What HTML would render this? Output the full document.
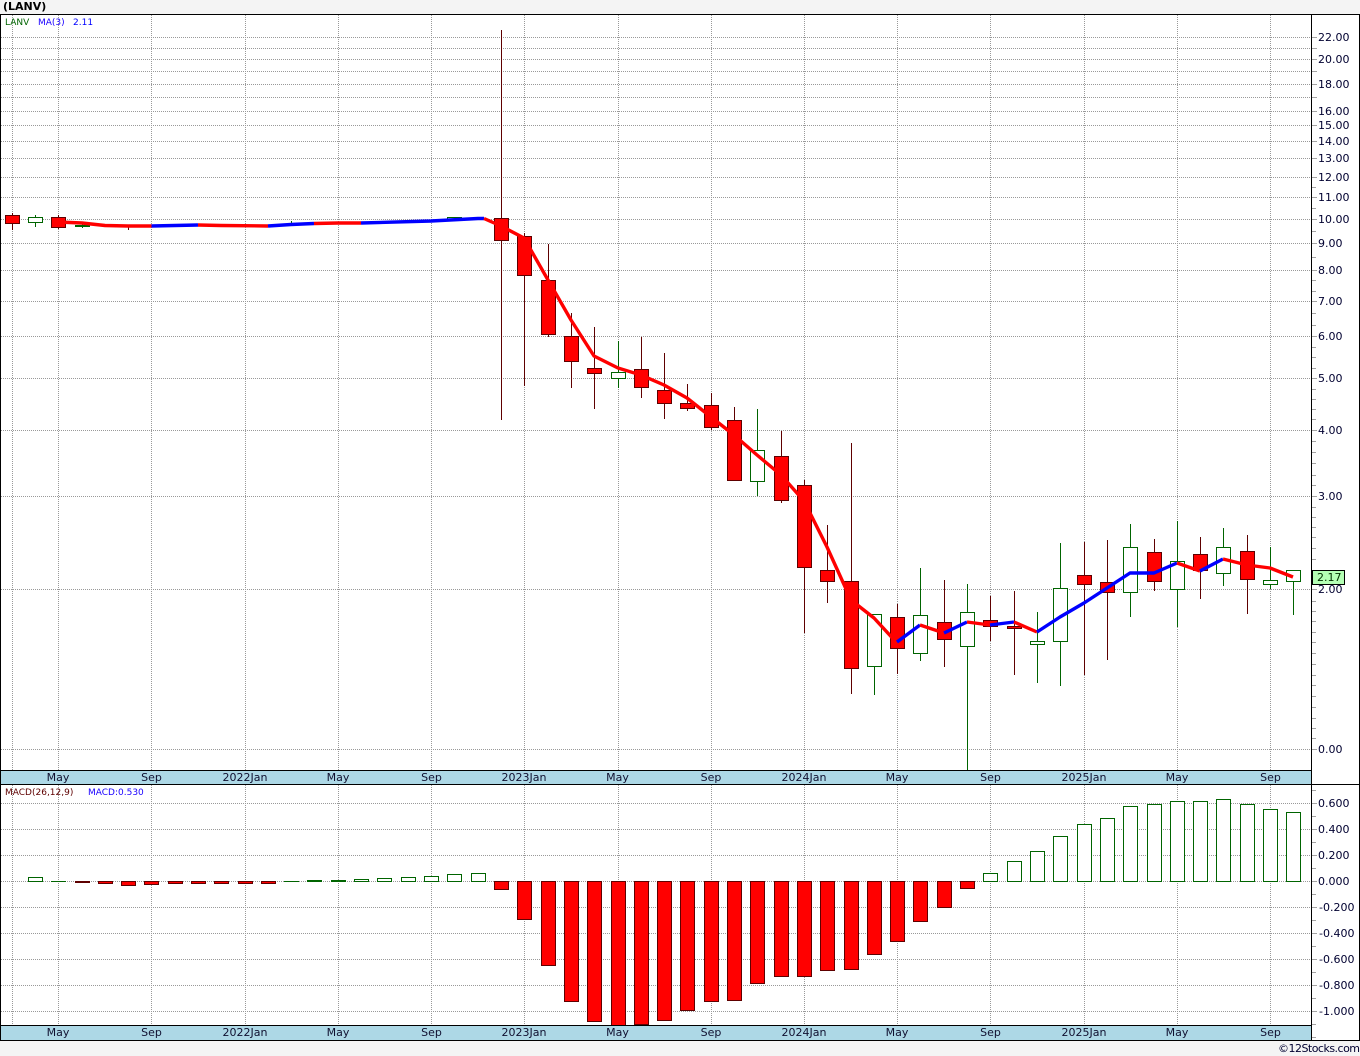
<!DOCTYPE html>
<html><head><meta charset="utf-8"><title>LANV</title>
<style>
html,body{margin:0;padding:0;background:#f4f4f4}
svg{display:block}
text{font-family:"DejaVu Sans","Liberation Sans",sans-serif;font-size:11px;fill:#000}
.c{shape-rendering:crispEdges}
.grid{stroke:#999;stroke-width:1;stroke-dasharray:1 1;fill:none}
.tick{stroke:#a3a3a3;stroke-width:1;fill:none}
.wr{stroke:#5e0000;stroke-width:1;fill:none}
.wg{stroke:#006400;stroke-width:1;fill:none}
.r rect{fill:#f00;stroke:#5e0000;stroke-width:1}
.g rect{fill:#fff;stroke:#006400;stroke-width:1}
.m{fill:none;stroke-width:3.4;stroke-linejoin:round}
.ax text{text-anchor:middle;fill:#101030}
.lb text{fill:#000030}
.s text{font-size:9px}
</style></head>
<body>
<svg width="1360" height="1056" viewBox="0 0 1360 1056" xmlns="http://www.w3.org/2000/svg">
<rect width="1360" height="1056" fill="#f4f4f4"/>
<rect x="0" y="14" width="1360" height="1027" fill="#fff"/>

<g class="c">
<path class="grid" d="M12.5 15V770M58.5 15V770M151.5 15V770M245.5 15V770M338.5 15V770M431.5 15V770M524.5 15V770M618.5 15V770M711.5 15V770M804.5 15V770M897.5 15V770M990.5 15V770M1084.5 15V770M1177.5 15V770M1270.5 15V770"/>
<path class="grid" d="M12.5 785V1025M58.5 785V1025M151.5 785V1025M245.5 785V1025M338.5 785V1025M431.5 785V1025M524.5 785V1025M618.5 785V1025M711.5 785V1025M804.5 785V1025M897.5 785V1025M990.5 785V1025M1084.5 785V1025M1177.5 785V1025M1270.5 785V1025"/>
<path class="grid" d="M1 37.5H1311M1 48.5H1311M1 59.5H1311M1 71.5H1311M1 84.5H1311M1 97.5H1311M1 111.5H1311M1 125.5H1311M1 141.5H1311M1 158.5H1311M1 177.5H1311M1 197.5H1311M1 219.5H1311M1 243.5H1311M1 270.5H1311M1 301.5H1311M1 336.5H1311M1 378.5H1311M1 430.5H1311M1 496.5H1311M1 589.5H1311M1 749.5H1311"/>
<path class="grid" d="M1 803.5H1311M1 829.5H1311M1 855.5H1311M1 881.5H1311M1 907.5H1311M1 933.5H1311M1 959.5H1311M1 985.5H1311M1 1011.5H1311"/>
<path class="tick" d="M1312 37.5h5M1312 48.5h5M1312 59.5h5M1312 71.5h5M1312 84.5h5M1312 97.5h5M1312 111.5h5M1312 125.5h5M1312 141.5h5M1312 158.5h5M1312 177.5h5M1312 187.5h4M1312 197.5h5M1312 208.5h4M1312 219.5h5M1312 231.5h4M1312 243.5h5M1312 257.5h4M1312 270.5h5M1312 280.5h4M1312 291.5h4M1312 301.5h5M1312 313.5h4M1312 325.5h4M1312 336.5h5M1312 347.5h4M1312 357.5h4M1312 368.5h4M1312 378.5h5M1312 389.5h4M1312 399.5h4M1312 409.5h4M1312 419.5h4M1312 430.5h5M1312 441.5h4M1312 452.5h4M1312 463.5h4M1312 475.5h4M1312 485.5h4M1312 496.5h5M1312 507.5h4M1312 517.5h4M1312 527.5h4M1312 537.5h4M1312 548.5h4M1312 559.5h4M1312 589.5h5M1312 601.5h4M1312 611.5h4M1312 621.5h4M1312 632.5h4M1312 642.5h4M1312 653.5h4M1312 664.5h4M1312 675.5h4M1312 685.5h4M1312 696.5h4M1312 707.5h4M1312 718.5h4M1312 728.5h4M1312 738.5h4M1312 749.5h5"/>
<path class="tick" d="M1312 790.5h4M1312 803.5h5M1312 816.5h4M1312 829.5h5M1312 842.5h4M1312 855.5h5M1312 868.5h4M1312 881.5h5M1312 894.5h4M1312 907.5h5M1312 920.5h4M1312 933.5h5M1312 946.5h4M1312 959.5h5M1312 972.5h4M1312 985.5h5M1312 998.5h4M1312 1011.5h5M1312 1024.5h4M1312 1037.5h4"/>

<!-- wicks -->
<path class="wr" d="M12.5 213V230M58.5 215V229M128.5 225V230M501.5 30V420M524.5 233V386M548.5 244V337M571.5 313V388M594.5 327V409M641.5 337V398M664.5 353V419M687.5 384V411M711.5 393V430M734.5 407V481M781.5 431V503M804.5 480V633M827.5 525V603M851.5 443V694M897.5 604V674M944.5 580V667M990.5 596V641M1014.5 591V675M1084.5 542V675M1107.5 540V660M1154.5 539V591M1200.5 537V599M1247.5 535V614"/>
<path class="wg" d="M35.5 215V227M82.5 224V228M291.5 221V224M618.5 341V388M757.5 409V496M874.5 614V695M920.5 568V661M967.5 584V770M1037.5 612V683M1060.5 543V686M1130.5 524V617M1177.5 521V627M1223.5 528V586M1270.5 547V589M1293.5 570V615"/>

<!-- price bodies -->
<g class="r">
<rect x="5.5" y="215.5" width="14" height="8"/>
<rect x="51.5" y="217.5" width="14" height="10"/>
<rect x="494.5" y="218.5" width="14" height="22"/>
<rect x="517.5" y="236.5" width="14" height="39"/>
<rect x="541.5" y="280.5" width="14" height="54"/>
<rect x="564.5" y="336.5" width="14" height="25"/>
<rect x="587.5" y="368.5" width="14" height="5"/>
<rect x="634.5" y="369.5" width="14" height="18"/>
<rect x="657.5" y="390.5" width="14" height="13"/>
<rect x="680.5" y="403.5" width="14" height="5"/>
<rect x="704.5" y="405.5" width="14" height="22"/>
<rect x="727.5" y="420.5" width="14" height="60"/>
<rect x="774.5" y="456.5" width="14" height="44"/>
<rect x="797.5" y="485.5" width="14" height="82"/>
<rect x="820.5" y="570.5" width="14" height="11"/>
<rect x="844.5" y="581.5" width="14" height="87"/>
<rect x="890.5" y="617.5" width="14" height="31"/>
<rect x="937.5" y="622.5" width="14" height="17"/>
<rect x="983.5" y="620.5" width="14" height="6"/>
<rect x="1007.5" y="626.5" width="14" height="2"/>
<rect x="1077.5" y="575.5" width="14" height="9"/>
<rect x="1100.5" y="582.5" width="14" height="10"/>
<rect x="1147.5" y="552.5" width="14" height="29"/>
<rect x="1193.5" y="554.5" width="14" height="16"/>
<rect x="1240.5" y="551.5" width="14" height="28"/>
</g>
<g class="g">
<rect x="28.5" y="217.5" width="14" height="5"/>
<rect x="75.5" y="225.5" width="14" height="1"/>
<rect x="447.5" y="217.5" width="14" height="2"/>
<rect x="611.5" y="372.5" width="14" height="6"/>
<rect x="750.5" y="450.5" width="14" height="31"/>
<rect x="867.5" y="614.5" width="14" height="52"/>
<rect x="913.5" y="615.5" width="14" height="38"/>
<rect x="960.5" y="612.5" width="14" height="34"/>
<rect x="1030.5" y="641.5" width="14" height="3"/>
<rect x="1053.5" y="588.5" width="14" height="53"/>
<rect x="1123.5" y="547.5" width="14" height="45"/>
<rect x="1170.5" y="561.5" width="14" height="28"/>
<rect x="1216.5" y="547.5" width="14" height="26"/>
<rect x="1263.5" y="580.5" width="14" height="4"/>
<rect x="1286.5" y="570.5" width="14" height="11"/>
</g>

<!-- MACD bars -->
<path class="wg" d="M51 881.5h15M284 881.5h15"/>
<g class="g">
<rect x="28.5" y="877.5" width="14" height="4"/>
<rect x="307.5" y="880.5" width="14" height="1"/>
<rect x="331.5" y="880.5" width="14" height="1"/>
<rect x="354.5" y="879.5" width="14" height="2"/>
<rect x="377.5" y="878.5" width="14" height="3"/>
<rect x="401.5" y="877.5" width="14" height="4"/>
<rect x="424.5" y="876.5" width="14" height="5"/>
<rect x="447.5" y="874.5" width="14" height="7"/>
<rect x="471.5" y="873.5" width="14" height="8"/>
<rect x="983.5" y="873.5" width="14" height="8"/>
<rect x="1007.5" y="861.5" width="14" height="20"/>
<rect x="1030.5" y="851.5" width="14" height="30"/>
<rect x="1053.5" y="836.5" width="14" height="45"/>
<rect x="1077.5" y="824.5" width="14" height="57"/>
<rect x="1100.5" y="818.5" width="14" height="63"/>
<rect x="1123.5" y="806.5" width="14" height="75"/>
<rect x="1147.5" y="804.5" width="14" height="77"/>
<rect x="1170.5" y="801.5" width="14" height="80"/>
<rect x="1193.5" y="801.5" width="14" height="80"/>
<rect x="1216.5" y="799.5" width="14" height="82"/>
<rect x="1240.5" y="804.5" width="14" height="77"/>
<rect x="1263.5" y="809.5" width="14" height="72"/>
<rect x="1286.5" y="812.5" width="14" height="69"/>
</g>
<g class="r">
<rect x="75.5" y="881.5" width="14" height="1"/>
<rect x="98.5" y="881.5" width="14" height="2"/>
<rect x="121.5" y="881.5" width="14" height="4"/>
<rect x="144.5" y="881.5" width="14" height="3"/>
<rect x="168.5" y="881.5" width="14" height="2"/>
<rect x="191.5" y="881.5" width="14" height="2"/>
<rect x="214.5" y="881.5" width="14" height="2"/>
<rect x="238.5" y="881.5" width="14" height="2"/>
<rect x="261.5" y="881.5" width="14" height="2"/>
<rect x="494.5" y="881.5" width="14" height="8"/>
<rect x="517.5" y="881.5" width="14" height="38"/>
<rect x="541.5" y="881.5" width="14" height="84"/>
<rect x="564.5" y="881.5" width="14" height="120"/>
<rect x="587.5" y="881.5" width="14" height="140"/>
<rect x="611.5" y="881.5" width="14" height="144"/>
<rect x="634.5" y="881.5" width="14" height="143"/>
<rect x="657.5" y="881.5" width="14" height="139"/>
<rect x="680.5" y="881.5" width="14" height="129"/>
<rect x="704.5" y="881.5" width="14" height="120"/>
<rect x="727.5" y="881.5" width="14" height="119"/>
<rect x="750.5" y="881.5" width="14" height="102"/>
<rect x="774.5" y="881.5" width="14" height="95"/>
<rect x="797.5" y="881.5" width="14" height="95"/>
<rect x="820.5" y="881.5" width="14" height="89"/>
<rect x="844.5" y="881.5" width="14" height="88"/>
<rect x="867.5" y="881.5" width="14" height="73"/>
<rect x="890.5" y="881.5" width="14" height="60"/>
<rect x="913.5" y="881.5" width="14" height="40"/>
<rect x="937.5" y="881.5" width="14" height="26"/>
<rect x="960.5" y="881.5" width="14" height="7"/>
</g>
</g>

<!-- MA line -->
<g>
<polyline class="m" stroke="#f00" points="58,222 82,223 105,225.5 128,226 151.5,226"/>
<polyline class="m" stroke="#00f" points="151.5,226 198,225"/>
<polyline class="m" stroke="#f00" points="198,225 221,225.5 268,226"/>
<polyline class="m" stroke="#00f" points="268,226 291,224.5 314,223.5"/>
<polyline class="m" stroke="#f00" points="314,223.5 338,223 361,223"/>
<polyline class="m" stroke="#00f" points="361,223 431,221 478,218.5 484,218.5"/>
<polyline class="m" stroke="#f00" points="484,218.5 501,226 524,238 548,280 571,320 594,356 618,368 641,375 664,385 687,398 711,417 734,435 757,455 781,475 804,501 827,547 851,600 874,618 897,643"/>
<polyline class="m" stroke="#00f" points="897,642 920,625"/>
<polyline class="m" stroke="#f00" points="920,625 944,633"/>
<polyline class="m" stroke="#00f" points="944,633 967,622"/>
<polyline class="m" stroke="#f00" points="967,622 990,625"/>
<polyline class="m" stroke="#00f" points="990,625 1014,622"/>
<polyline class="m" stroke="#f00" points="1014,622 1037,632"/>
<polyline class="m" stroke="#00f" points="1037,632 1060,617 1084,603 1107,588 1130,573 1154,573 1177,563"/>
<polyline class="m" stroke="#f00" points="1177,563 1200,571"/>
<polyline class="m" stroke="#00f" points="1200,571 1223,559"/>
<polyline class="m" stroke="#f00" points="1223,559 1247,565 1270,568 1293,577"/>
</g>

<!-- frames and bands -->
<g class="c">
<rect x="1" y="771" width="1310" height="13" fill="#add8e6"/>
<rect x="1" y="1026" width="1310" height="14" fill="#add8e6"/>
<rect x="0" y="14" width="1360" height="1" fill="#000"/>
<rect x="0" y="770" width="1311" height="1" fill="#000"/>
<rect x="0" y="784" width="1360" height="1" fill="#000"/>
<rect x="0" y="1025" width="1311" height="1" fill="#000"/>
<rect x="0" y="1040" width="1360" height="1" fill="#000"/>
<rect x="0" y="14" width="1" height="1027" fill="#000"/>
<rect x="1311" y="14" width="1" height="1027" fill="#000"/>
<rect x="1359" y="14" width="1" height="1027" fill="#000"/>
</g>

<text x="3" y="10" style="font-weight:bold">(LANV)</text>
<g class="s">
<text x="5" y="25" style="fill:#006400">LANV</text>
<text x="38" y="25" style="fill:#1a00ff">MA(3)</text>
<text x="73" y="25" style="fill:#0000ff">2.11</text>
<text x="5" y="795" style="fill:#5e0000">MACD(26,12,9)</text>
<text x="88" y="795" style="fill:#1a00ff">MACD:0.530</text>
</g>

<g class="ax">
<text x="58" y="781">May</text><text x="151.5" y="781">Sep</text><text x="245" y="781">2022Jan</text><text x="338" y="781">May</text><text x="431.5" y="781">Sep</text><text x="524" y="781">2023Jan</text><text x="617.5" y="781">May</text><text x="711" y="781">Sep</text><text x="804" y="781">2024Jan</text><text x="897" y="781">May</text><text x="990.5" y="781">Sep</text><text x="1084" y="781">2025Jan</text><text x="1177" y="781">May</text><text x="1270.5" y="781">Sep</text>
<text x="58" y="1036">May</text><text x="151.5" y="1036">Sep</text><text x="245" y="1036">2022Jan</text><text x="338" y="1036">May</text><text x="431.5" y="1036">Sep</text><text x="524" y="1036">2023Jan</text><text x="617.5" y="1036">May</text><text x="711" y="1036">Sep</text><text x="804" y="1036">2024Jan</text><text x="897" y="1036">May</text><text x="990.5" y="1036">Sep</text><text x="1084" y="1036">2025Jan</text><text x="1177" y="1036">May</text><text x="1270.5" y="1036">Sep</text>
</g>

<g class="lb">
<text x="1318" y="41">22.00</text><text x="1318" y="63">20.00</text><text x="1318" y="88">18.00</text><text x="1318" y="115">16.00</text><text x="1318" y="129">15.00</text><text x="1318" y="145">14.00</text><text x="1318" y="162">13.00</text><text x="1318" y="181">12.00</text><text x="1318" y="201">11.00</text><text x="1318" y="223">10.00</text>
<text x="1318" y="247">9.00</text><text x="1318" y="274">8.00</text><text x="1318" y="305">7.00</text><text x="1318" y="340">6.00</text><text x="1318" y="382">5.00</text><text x="1318" y="434">4.00</text><text x="1318" y="500">3.00</text><text x="1318" y="593">2.00</text><text x="1318" y="753">0.00</text>
<text x="1318" y="807">0.600</text><text x="1318" y="833">0.400</text><text x="1318" y="859">0.200</text><text x="1318" y="885">0.000</text><text x="1319" y="911">-0.200</text><text x="1319" y="937">-0.400</text><text x="1319" y="963">-0.600</text><text x="1319" y="989">-0.800</text><text x="1319" y="1015">-1.000</text>
</g>

<rect class="c" x="1312.5" y="570.5" width="32" height="14" fill="#b4ffb4" stroke="#000"/>
<text x="1317" y="581" style="fill:#003000">2.17</text>
<text x="1360" y="1052" text-anchor="end" textLength="82" style="fill:#000030">©12Stocks.com</text>
</svg>
</body></html>
